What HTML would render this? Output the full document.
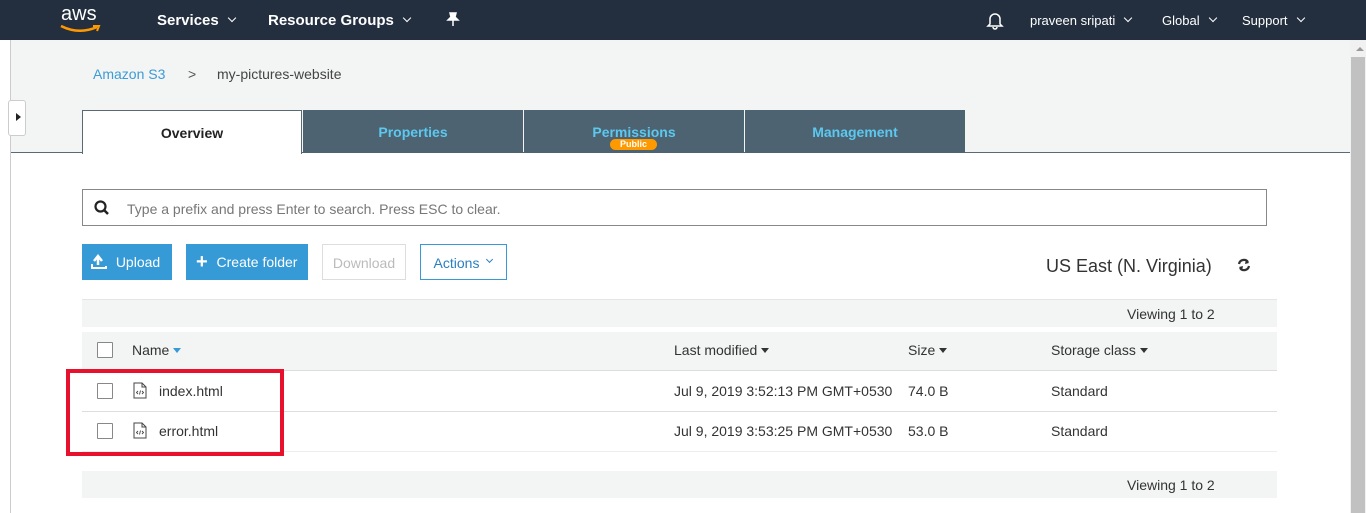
<!DOCTYPE html>
<html><head><style>
*{box-sizing:border-box;margin:0;padding:0}
body{width:1366px;height:513px;overflow:hidden;font-family:"Liberation Sans",Arial,sans-serif;background:#fff;position:relative;color:#333}
.abs{position:absolute}
.top{left:0;top:0;width:1366px;height:40px;background:#232f3e;color:#fff;font-size:15px;font-weight:bold}
.top span{position:absolute;top:12px}
.nav2{font-weight:normal;font-size:13px}
.car{display:inline-block;width:6px;height:6px;border-right:1.5px solid #fff;border-bottom:1.5px solid #fff;transform:rotate(45deg);margin-left:10px;position:relative;top:-4px}
.tab{position:absolute;top:110px;height:43px;background:#4d6371;color:#5cc8ef;font-weight:bold;font-size:14px;text-align:center;padding-top:14px}
.btn{position:absolute;top:244px;height:36px;font-size:14px;padding-top:10px;text-align:center}
.cb{position:absolute;width:16px;height:16px;border:1px solid #888;background:#fff;border-radius:1px}
.t{position:absolute;font-size:14px;color:#333}
.tri{display:inline-block;width:0;height:0;border-left:4px solid transparent;border-right:4px solid transparent;border-top:5px solid #333;margin-left:4px;vertical-align:2px}
</style></head><body>
<div class="abs top">
 <span style="left:61px;top:3px;font-weight:normal;font-size:20px">aws</span>
 <svg class="abs" style="left:59px;top:24px" width="44" height="10"><path d="M2 2 Q20 11 38 3" stroke="#f90" stroke-width="2.5" fill="none"/><path d="M34 2 L40 2 L38 7" stroke="#f90" stroke-width="2" fill="none"/></svg>
 <span style="left:157px">Services<i class="car"></i></span>
 <span style="left:268px">Resource Groups<i class="car"></i></span>
 <svg class="abs" style="left:446px;top:12px" width="14" height="15"><path d="M4 1 H10 L9 5 L12 8 H2 L5 5 Z M7 8 V14" stroke="#fff" stroke-width="1.5" fill="#fff"/></svg>
 <svg class="abs" style="left:986px;top:11px" width="18" height="19"><path d="M4 13 V8 a5 5 0 0 1 10 0 V13 L16 15 H2 Z M7 16 a2 2 0 0 0 4 0" stroke="#fff" stroke-width="1.5" fill="none"/></svg>
 <span class="nav2" style="left:1030px;top:13px">praveen sripati<i class="car"></i></span>
 <span class="nav2" style="left:1162px;top:13px">Global<i class="car"></i></span>
 <span class="nav2" style="left:1242px;top:13px">Support<i class="car"></i></span>
</div>
<div class="abs" style="left:0;top:40px;width:11px;height:473px;background:#fff;border-right:1px solid #ccc"></div>
<div class="abs" style="left:11px;top:40px;width:1339px;height:113px;background:#f3f4f4;border-bottom:1px solid #5a6a73"></div>
<div class="abs" style="left:8px;top:100px;width:18px;height:36px;background:#fff;border:1px solid #ccc;border-radius:3px"></div>
<div class="abs" style="left:16px;top:113px;border-left:5px solid #222;border-top:4px solid transparent;border-bottom:4px solid transparent"></div>
<div class="abs" style="left:1350px;top:40px;width:16px;height:473px;background:#f1f1f1"></div>
<div class="abs" style="left:1351px;top:57px;width:14px;height:456px;background:#c1c1c1"></div>
<div class="abs" style="left:1356px;top:47px;border-bottom:4px solid #999;border-left:4px solid transparent;border-right:4px solid transparent"></div>
<div class="t" style="left:93px;top:66px;color:#3d9bd6">Amazon S3</div>
<div class="t" style="left:188px;top:66px;color:#555">&gt;</div>
<div class="t" style="left:217px;top:66px;color:#444">my-pictures-website</div>
<div class="abs" style="left:82px;top:110px;width:220px;height:44px;background:#fff;border:1px solid #5a6a73;border-bottom:none;text-align:center;padding-top:14px;font-size:14px;font-weight:bold;color:#222">Overview</div>
<div class="tab" style="left:303px;width:220px">Properties</div>
<div class="tab" style="left:524px;width:220px">Permissions</div>
<div class="abs" style="left:610px;top:139px;width:47px;height:11px;background:#f90;border-radius:6px;color:#fff;font-size:9px;font-weight:bold;text-align:center;line-height:11px">Public</div>
<div class="tab" style="left:745px;width:220px">Management</div>
<div class="abs" style="left:82px;top:189px;width:1185px;height:37px;border:1px solid #888"></div>
<svg class="abs" style="left:94px;top:200px" width="16" height="16"><circle cx="6.5" cy="6.5" r="5" stroke="#222" stroke-width="2.2" fill="none"/><path d="M10 10 L14 14" stroke="#222" stroke-width="2.5"/></svg>
<div class="t" style="left:127px;top:201px;color:#777">Type a prefix and press Enter to search. Press ESC to clear.</div>
<div class="btn" style="left:82px;width:90px;background:#359ad6;color:#fff;padding-left:22px">Upload</div>
<svg class="abs" style="left:91px;top:254px" width="16" height="16"><path d="M7 11 V3 M3 7 L7 2 L11 7" stroke="#fff" stroke-width="2.5" fill="none"/><path d="M1 10 V14 H15 V12" stroke="#fff" stroke-width="2" fill="none"/></svg>
<div class="btn" style="left:186px;width:122px;background:#359ad6;color:#fff;padding-left:20px">Create folder</div>
<div class="abs" style="left:196px;top:254px;color:#fff;font-size:20px;font-weight:bold;line-height:16px">+</div>
<div class="btn" style="left:322px;width:84px;border:1px solid #ddd;color:#bbb">Download</div>
<div class="btn" style="left:420px;width:87px;border:1px solid #359ad6;color:#2a7fbf;padding-right:14px">Actions</div>
<div class="abs" style="left:487px;top:257px;width:5px;height:5px;border-right:1px solid #2a7fbf;border-bottom:1px solid #2a7fbf;transform:rotate(45deg)"></div>
<div class="abs" style="left:1046px;top:256px;font-size:18px;color:#333">US East (N. Virginia)</div>
<svg class="abs" style="left:1237px;top:258px" width="14" height="14"><path d="M2 6 A5 5 0 0 1 11 4 M12 8 A5 5 0 0 1 3 10" stroke="#333" stroke-width="2.2" fill="none"/><path d="M9 1 L12 5 L8 6 Z M5 13 L2 9 L6 8 Z" fill="#333"/></svg>
<div class="abs" style="left:82px;top:299px;width:1195px;height:28px;background:#f3f4f4;border-top:1px solid #e5e5e5"></div>
<div class="t" style="left:1127px;top:306px">Viewing 1 to 2</div>
<div class="abs" style="left:82px;top:332px;width:1195px;height:39px;background:#f3f4f4;border-bottom:1px solid #ddd"></div>
<div class="cb" style="left:97px;top:342px"></div>
<div class="t" style="left:132px;top:342px">Name<span class="tri" style="border-top-color:#359ad6"></span></div>
<div class="t" style="left:674px;top:342px">Last modified<span class="tri"></span></div>
<div class="t" style="left:908px;top:342px">Size<span class="tri"></span></div>
<div class="t" style="left:1051px;top:342px">Storage class<span class="tri"></span></div>
<div class="abs" style="left:82px;top:411px;width:1195px;height:1px;background:#ddd"></div>
<div class="abs" style="left:82px;top:451px;width:1195px;height:1px;background:#eee"></div>
<div class="cb" style="left:97px;top:383px"></div>
<div class="cb" style="left:97px;top:423px"></div>
<svg class="abs" style="left:133px;top:382px" width="14" height="17"><path d="M1 1 H9 L13 5 V16 H1 Z M9 1 V5 H13" stroke="#444" fill="none"/><path d="M5 9 L3.5 10.5 L5 12 M9 9 L10.5 10.5 L9 12 M7.5 8.5 L6.5 12.5" stroke="#444" stroke-width="0.9" fill="none"/></svg>
<svg class="abs" style="left:133px;top:422px" width="14" height="17"><path d="M1 1 H9 L13 5 V16 H1 Z M9 1 V5 H13" stroke="#444" fill="none"/><path d="M5 9 L3.5 10.5 L5 12 M9 9 L10.5 10.5 L9 12 M7.5 8.5 L6.5 12.5" stroke="#444" stroke-width="0.9" fill="none"/></svg>
<div class="t" style="left:159px;top:383px">index.html</div>
<div class="t" style="left:159px;top:423px">error.html</div>
<div class="t" style="left:674px;top:383px">Jul 9, 2019 3:52:13 PM GMT+0530</div>
<div class="t" style="left:674px;top:423px">Jul 9, 2019 3:53:25 PM GMT+0530</div>
<div class="t" style="left:908px;top:383px">74.0 B</div>
<div class="t" style="left:908px;top:423px">53.0 B</div>
<div class="t" style="left:1051px;top:383px">Standard</div>
<div class="t" style="left:1051px;top:423px">Standard</div>
<div class="abs" style="left:66px;top:369px;width:218px;height:87px;border:4px solid #e8112d"></div>
<div class="abs" style="left:82px;top:471px;width:1195px;height:27px;background:#f3f4f4"></div>
<div class="t" style="left:1127px;top:477px">Viewing 1 to 2</div>
</body></html>
